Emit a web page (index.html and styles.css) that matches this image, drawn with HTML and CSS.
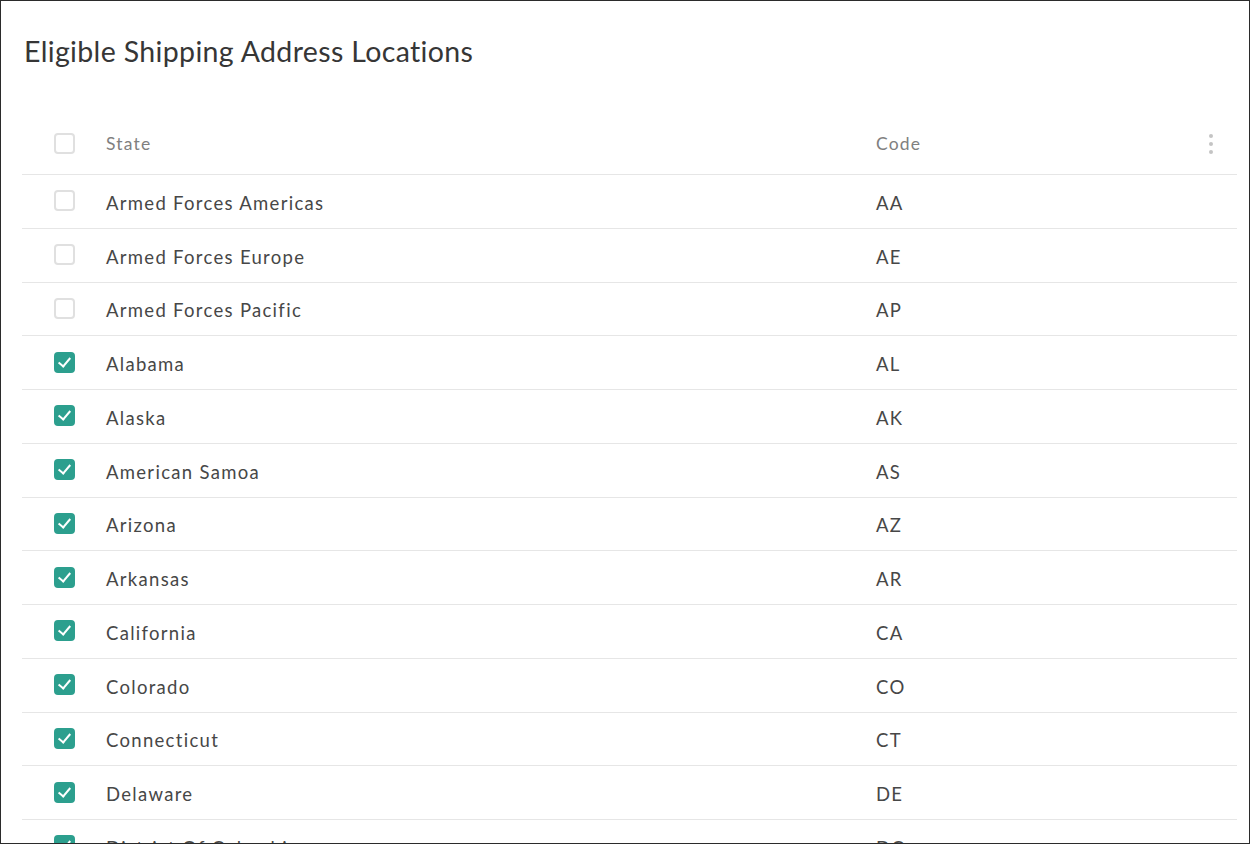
FILE: index.html
```html
<!DOCTYPE html>
<html lang="en">
  <head>
    <meta charset="UTF-8" />
    <title>Eligible Shipping Address Locations</title>
    <link rel="stylesheet" href="styles.css">
  </head>
  <body>
    <div class="frame">
      <h1 class="title">Eligible Shipping Address Locations</h1>

      <div class="table">
        <div class="row head">
          <div class="cell check"><span class="box"></span></div>
          <div class="cell state">State</div>
          <div class="cell code">Code</div>
          <div class="cell menu"><span class="dots"><i></i><i></i><i></i></span></div>
        </div>
        <div class="row">
          <div class="cell check"><span class="box"></span></div>
          <div class="cell state">Armed Forces Americas</div>
          <div class="cell code">AA</div>
          <div class="cell menu"></div>
        </div>
        <div class="row">
          <div class="cell check"><span class="box"></span></div>
          <div class="cell state">Armed Forces Europe</div>
          <div class="cell code">AE</div>
          <div class="cell menu"></div>
        </div>
        <div class="row">
          <div class="cell check"><span class="box"></span></div>
          <div class="cell state">Armed Forces Pacific</div>
          <div class="cell code">AP</div>
          <div class="cell menu"></div>
        </div>
        <div class="row">
          <div class="cell check"><span class="box on"></span></div>
          <div class="cell state">Alabama</div>
          <div class="cell code">AL</div>
          <div class="cell menu"></div>
        </div>
        <div class="row">
          <div class="cell check"><span class="box on"></span></div>
          <div class="cell state">Alaska</div>
          <div class="cell code">AK</div>
          <div class="cell menu"></div>
        </div>
        <div class="row">
          <div class="cell check"><span class="box on"></span></div>
          <div class="cell state">American Samoa</div>
          <div class="cell code">AS</div>
          <div class="cell menu"></div>
        </div>
        <div class="row">
          <div class="cell check"><span class="box on"></span></div>
          <div class="cell state">Arizona</div>
          <div class="cell code">AZ</div>
          <div class="cell menu"></div>
        </div>
        <div class="row">
          <div class="cell check"><span class="box on"></span></div>
          <div class="cell state">Arkansas</div>
          <div class="cell code">AR</div>
          <div class="cell menu"></div>
        </div>
        <div class="row">
          <div class="cell check"><span class="box on"></span></div>
          <div class="cell state">California</div>
          <div class="cell code">CA</div>
          <div class="cell menu"></div>
        </div>
        <div class="row">
          <div class="cell check"><span class="box on"></span></div>
          <div class="cell state">Colorado</div>
          <div class="cell code">CO</div>
          <div class="cell menu"></div>
        </div>
        <div class="row">
          <div class="cell check"><span class="box on"></span></div>
          <div class="cell state">Connecticut</div>
          <div class="cell code">CT</div>
          <div class="cell menu"></div>
        </div>
        <div class="row">
          <div class="cell check"><span class="box on"></span></div>
          <div class="cell state">Delaware</div>
          <div class="cell code">DE</div>
          <div class="cell menu"></div>
        </div>
        <div class="row">
          <div class="cell check"><span class="box on"></span></div>
          <div class="cell state">District Of Columbia</div>
          <div class="cell code">DC</div>
          <div class="cell menu"></div>
        </div>
      </div>
    </div>
  </body>
</html>
```

FILE: styles.css
```css
html,
body {
  margin: 0;
  background: #fff;
}
body {
  font-family: Lato, "Open Sans", Arial, sans-serif;
  color: #474747;
}
.frame {
  box-sizing: border-box;
  width: 1250px;
  height: 844px;
  border: 1px solid #2b2b2b;
  overflow: hidden;
  padding: 0 12px 0 21px;
}
.title {
  margin: 33px 0 0 2px;
  font-size: 28.5px;
  font-weight: 400;
  color: #363636;
  line-height: 34px;
  letter-spacing: 0.35px;
}
.table {
  margin-top: 49px;
}
.row {
  display: flex;
  align-items: center;
  box-sizing: border-box;
  height: 53.75px;
  border-bottom: 1px solid #e6e6e6;
  font-size: 18.5px;
  letter-spacing: 1.3px;
}
.row .state,
.row .code {
  padding-top: 3px;
}
.row.head {
  height: 58px;
  padding-bottom: 4px;
  color: #808080;
  font-size: 17.5px;
  letter-spacing: 1.2px;
}
.row.head .state,
.row.head .code {
  padding-top: 0;
}
.cell.check {
  width: 84px;
  box-sizing: border-box;
  padding-left: 32px;
  padding-bottom: 1px;
  display: flex;
}
.cell.state {
  flex: 1;
}
.cell.code {
  width: 309px;
}
.cell.menu {
  width: 52px;
  display: flex;
  justify-content: center;
}
.box {
  box-sizing: border-box;
  width: 21px;
  height: 21px;
  border: 2px solid #e0e0e0;
  border-radius: 4px;
  position: relative;
}
.box.on {
  background: #2c9f8e;
  border-color: #2c9f8e;
}
.box.on::after {
  content: "";
  position: absolute;
  left: 5px;
  top: 1px;
  width: 5px;
  height: 10px;
  border: solid #fff;
  border-width: 0 2px 2px 0;
  transform: rotate(40deg);
}
.dots {
  display: flex;
  flex-direction: column;
  gap: 4px;
}
.dots i {
  display: block;
  width: 4px;
  height: 4px;
  border-radius: 50%;
  background: #c4c4c4;
}
```
